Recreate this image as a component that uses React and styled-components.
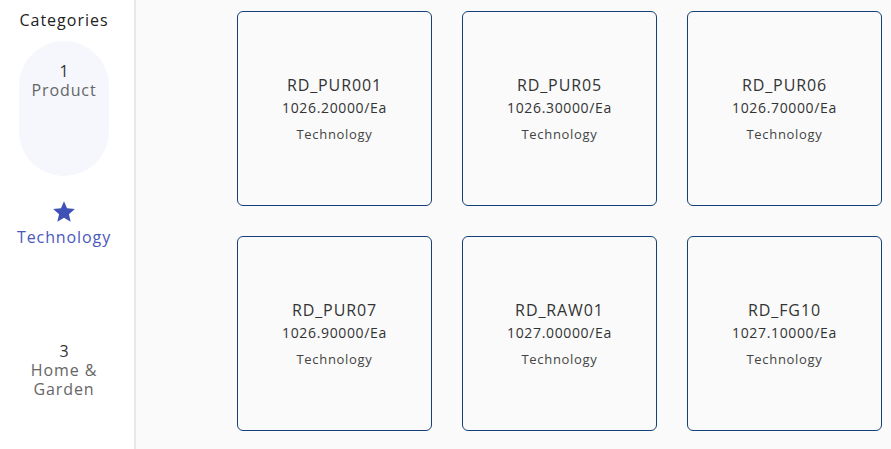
import React from 'react';
import styled, { createGlobalStyle } from 'styled-components';

const GlobalStyle = createGlobalStyle`
  html, body {
    margin: 0;
    padding: 0;
    background: #fafafa;
    font-family: "Open Sans", "Noto Sans", sans-serif;
  }
`;

const Page = styled.div`
  display: flex;
  height: 449px;
  overflow: hidden;
`;

const Sidebar = styled.aside`
  width: 136px;
  flex-shrink: 0;
  background: #ffffff;
  border-right: 2px solid #e8e8e8;
  display: flex;
  flex-direction: column;
  align-items: center;
  padding: 9px 6px 0 0;
  box-sizing: border-box;
`;

const SideTitle = styled.div`
  font-size: 16px;
  line-height: 22px;
  letter-spacing: 1px;
  color: #222;
  margin-bottom: 10px;
`;

const CategoryItem = styled.div`
  width: 90px;
  height: 135px;
  flex-shrink: 0;
  margin-bottom: 10px;
  box-sizing: border-box;
  padding-top: ${(p) => p.$top}px;
  border-radius: 45px;
  background: ${(p) => (p.$highlight ? '#f5f7fc' : 'transparent')};
  display: flex;
  flex-direction: column;
  align-items: center;
  text-align: center;
`;

const Num = styled.div`
  font-size: 16px;
  line-height: 20px;
  color: #333;
`;

const Label = styled.div`
  font-size: 16px;
  line-height: 19px;
  letter-spacing: 0.9px;
  margin-top: ${(p) => (p.$active ? 3 : 0)}px;
  color: ${(p) => (p.$active ? '#4a58bd' : '#666')};
  white-space: ${(p) => (p.$nowrap ? 'nowrap' : 'normal')};
`;

const Main = styled.main`
  flex: 1;
  padding: 11px 0 0 101px;
  display: grid;
  grid-template-columns: repeat(3, 195px);
  grid-auto-rows: 195px;
  column-gap: 30px;
  row-gap: 30px;
  align-content: start;
`;

const Card = styled.div`
  box-sizing: border-box;
  border: 1px solid #163f7a;
  border-radius: 6px;
  background: #fafafa;
  display: flex;
  flex-direction: column;
  align-items: center;
  justify-content: center;
  text-align: center;
  color: #333;
`;

const CardTitle = styled.div`
  font-size: 16px;
  line-height: 22px;
  letter-spacing: 0.9px;
  color: #333;
  margin-bottom: 2px;
`;

const Price = styled.div`
  font-size: 14px;
  line-height: 20px;
  letter-spacing: 0.65px;
  color: #333;
  margin-bottom: 7px;
`;

const Cat = styled.div`
  font-size: 13px;
  line-height: 18px;
  letter-spacing: 0.7px;
  color: #444;
`;

const Star = () => (
  <svg width="26" height="26" viewBox="0 0 24 24" fill="#3f51b5">
    <path d="M12 17.27L18.18 21l-1.64-7.03L22 9.24l-7.19-.61L12 2 9.19 8.63 2 9.24l5.46 4.73L5.82 21z" />
  </svg>
);

const products = [
  { code: 'RD_PUR001', price: '1026.20000' },
  { code: 'RD_PUR05', price: '1026.30000' },
  { code: 'RD_PUR06', price: '1026.70000' },
  { code: 'RD_PUR07', price: '1026.90000' },
  { code: 'RD_RAW01', price: '1027.00000' },
  { code: 'RD_FG10', price: '1027.10000' },
];

export default function App() {
  return (
    <>
      <GlobalStyle />
      <Page>
        <Sidebar>
          <SideTitle>Categories</SideTitle>
          <CategoryItem $highlight $top={20}>
            <Num>1</Num>
            <Label>Product</Label>
          </CategoryItem>
          <CategoryItem $top={13}>
            <Star />
            <Label $active $nowrap>Technology</Label>
          </CategoryItem>
          <CategoryItem $top={10}>
            <Num>3</Num>
            <Label>Home &amp; Garden</Label>
          </CategoryItem>
        </Sidebar>
        <Main>
          {products.map((p) => (
            <Card key={p.code}>
              <CardTitle>{p.code}</CardTitle>
              <Price>{p.price}/Ea</Price>
              <Cat>Technology</Cat>
            </Card>
          ))}
        </Main>
      </Page>
    </>
  );
}
